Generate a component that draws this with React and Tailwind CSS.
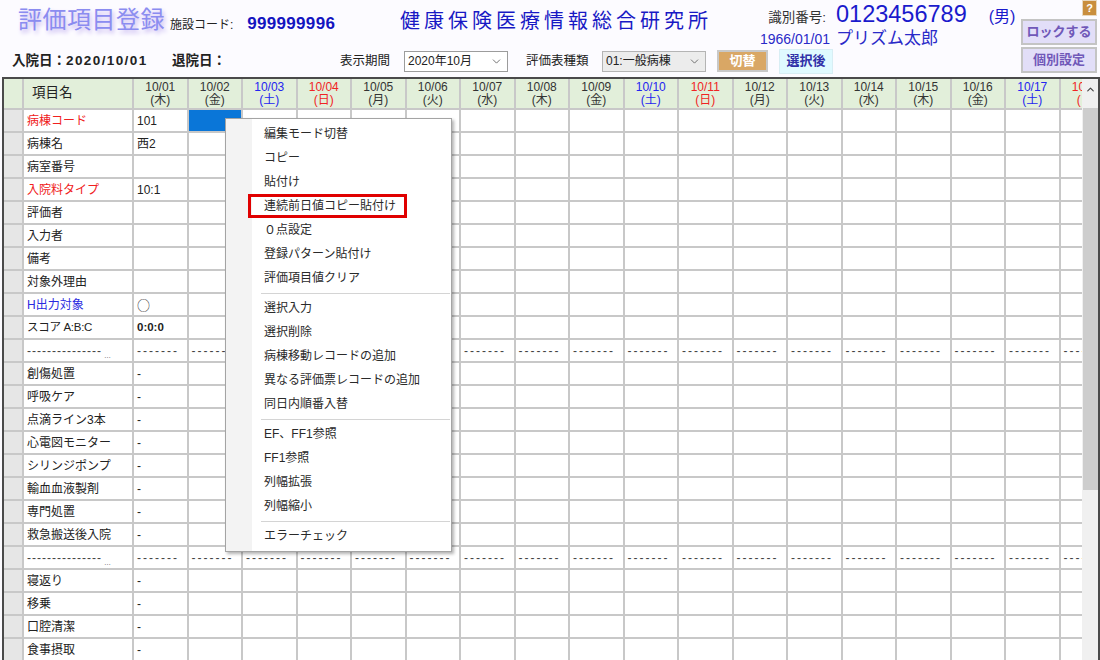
import React from 'react';
import { ChevronDown, ChevronUp } from 'lucide-react';

const days = [
  ['10/01', '木'], ['10/02', '金'], ['10/03', '土'], ['10/04', '日'], ['10/05', '月'], ['10/06', '火'],
  ['10/07', '水'], ['10/08', '木'], ['10/09', '金'], ['10/10', '土'], ['10/11', '日'], ['10/12', '月'],
  ['10/13', '火'], ['10/14', '水'], ['10/15', '木'], ['10/16', '金'], ['10/17', '土'], ['10/18', '日'],
];

const rows = [
  { label: '病棟コード', c: 'red', v: '101' },
  { label: '病棟名', v: '西2' },
  { label: '病室番号' },
  { label: '入院料タイプ', c: 'red', v: '10:1' },
  { label: '評価者' },
  { label: '入力者' },
  { label: '備考' },
  { label: '対象外理由' },
  { label: 'H出力対象', c: 'blue', v: '○' },
  { label: 'スコア A:B:C', v: '0:0:0' },
  { sep: true },
  { label: '創傷処置', v: '-' },
  { label: '呼吸ケア', v: '-' },
  { label: '点滴ライン3本', v: '-' },
  { label: '心電図モニター', v: '-' },
  { label: 'シリンジポンプ', v: '-' },
  { label: '輸血血液製剤', v: '-' },
  { label: '専門処置', v: '-' },
  { label: '救急搬送後入院', v: '-' },
  { sep: true },
  { label: '寝返り', v: '-' },
  { label: '移乗', v: '-' },
  { label: '口腔清潔', v: '-' },
  { label: '食事摂取', v: '-' },
];

const menu = [
  ['編集モード切替', 'コピー', '貼付け', '連続前日値コピー貼付け', '０点設定', '登録パターン貼付け', '評価項目値クリア'],
  ['選択入力', '選択削除', '病棟移動レコードの追加', '異なる評価票レコードの追加', '同日内順番入替'],
  ['EF、FF1参照', 'FF1参照', '列幅拡張', '列幅縮小'],
  ['エラーチェック'],
];

function dayColor(d) {
  if (d === '土') return 'text-[#2424f0]';
  if (d === '日') return 'text-[#f02424]';
  return 'text-[#333333]';
}

function labelColor(c) {
  if (c === 'red') return 'text-[#f02020]';
  if (c === 'blue') return 'text-[#2a2ae0]';
  return 'text-[#222222]';
}

function CellValue({ v }) {
  if (v === '○') return <span className="font-['Noto_Sans_CJK_JP',sans-serif] text-[13px] leading-none text-[#333]">○</span>;
  if (v === '0:0:0') return <span className="text-[11.5px] font-bold">0:0:0</span>;
  return <span>{v}</span>;
}

export default function App() {
  return (
    <div className="relative w-[1100px] h-[660px] overflow-hidden bg-[#fcfbff] font-['Liberation_Sans','Noto_Sans_CJK_JP',sans-serif] text-[#222222]">
      {/* Header */}
      <div className="flex h-[77px]">
        <div className="flex flex-col w-[1020px]">
          {/* row 1 */}
          <div className="flex h-[45px]">
            <div className="w-[170px] pl-[18px] pt-[5px] shrink-0">
              <span className="text-[24px] leading-[30px] text-[#8b8cf0] [text-shadow:2px_3px_4px_#c6b6f0] tracking-[0.5px]">評価項目登録</span>
            </div>
            <div className="w-[230px] shrink-0 pt-[11px] flex items-baseline">
              <span className="text-[12px] text-[#222]">施設コード:</span>
              <span className="ml-[14px] text-[17px] font-bold text-[#1414c0] tracking-[0.3px]">999999996</span>
            </div>
            <div className="w-[350px] shrink-0 pt-[8px]">
              <span className="text-[20px] leading-[26px] text-[#1818c4] tracking-[4px]">健康保険医療情報総合研究所</span>
            </div>
            <div className="grid grid-cols-[80px_auto] gap-x-[6px] items-baseline pt-[2px]">
              <span className="text-[13.5px] text-[#333] text-right pr-[4px]">識別番号:</span>
              <span className="flex items-baseline">
                <span className="text-[23.5px] leading-[24px] text-[#1a1acc]">0123456789</span>
                <span className="ml-[22px] text-[16px] text-[#1a1acc]">(男)</span>
              </span>
              <span className="text-[14px] leading-[18px] text-[#2a2ac8] text-right">1966/01/01</span>
              <span className="text-[17px] leading-[20px] text-[#2a2ac8]">プリズム太郎</span>
            </div>
          </div>
          {/* row 2 */}
          <div className="flex items-center h-[32px] text-[13px]">
            <div className="w-[160px] ml-[12px] shrink-0 font-bold text-[13.5px] whitespace-nowrap">
              入院日：<span className="tracking-[1.4px]">2020/10/01</span>
            </div>
            <div className="w-[168px] shrink-0 font-bold text-[13.5px]">退院日：</div>
            <div className="w-[64px] shrink-0 text-[12.5px]">表示期間</div>
            <div className="w-[104px] h-[21px] shrink-0 bg-white border border-[#9c9c9c] flex items-center justify-between pl-[3px] pr-[4px] text-[12px]">
              <span>2020年10月</span>
              <ChevronDown size={13} strokeWidth={1.5} className="text-[#555]" />
            </div>
            <div className="w-[76px] ml-[18px] shrink-0 text-[12.5px]">評価表種類</div>
            <div className="w-[104px] h-[21px] shrink-0 bg-[#ececec] border border-[#b4b4b4] flex items-center justify-between pl-[3px] pr-[4px] text-[12px]">
              <span>01:一般病棟</span>
              <ChevronDown size={13} strokeWidth={1.5} className="text-[#555]" />
            </div>
            <div className="w-[51px] h-[22px] ml-[11px] shrink-0 bg-[#d9a765] border-2 border-[#c8c8c8] flex items-center justify-center text-white font-bold text-[13px]">切替</div>
            <div className="w-[54px] h-[25px] ml-[11px] shrink-0 bg-[#e0faff] border border-[#d8eef4] flex items-center justify-center text-[#3030a8] font-bold text-[13px]">選択後</div>
          </div>
        </div>
        <div className="flex flex-col items-end w-[80px] pr-[3px]">
          <div className="w-[15px] h-[16px] bg-[#c98e3e] border border-[#e8d8c0] flex items-center justify-center text-white text-[11px] font-bold leading-none">?</div>
          <div className="mt-[3px] w-[76px] h-[26px] bg-[#e2def8] border-2 border-[#c4c4c4] flex items-center justify-center text-[#7058b8] font-bold text-[13px]">ロックする</div>
          <div className="mt-[2px] w-[76px] h-[26px] bg-[#e2def8] border-2 border-[#c4c4c4] flex items-center justify-center text-[#7058b8] font-bold text-[13px]">個別設定</div>
        </div>
      </div>

      {/* Table */}
      <div className="flex ml-[2px] h-[583px] border-t-2 border-l-2 border-r-2 border-[#4a4a4a] bg-white">
        <div className="flex-1 overflow-hidden">
          {/* header */}
          <div className="flex h-[31px] bg-[#e2efda]">
            <div className="w-[20px] shrink-0 border-r-2 border-b-2 border-[#c8c8c8]" />
            <div className="w-[110px] shrink-0 border-r-2 border-b-2 border-[#c8c8c8] flex items-center pl-[8px] text-[13.5px] text-[#222]">項目名</div>
            {days.map(([d, w]) => (
              <div key={d} className={`w-[54.5px] shrink-0 border-r-2 border-b-2 border-[#c8c8c8] flex flex-col items-center justify-center text-[12px] leading-[12.5px] ${dayColor(w)}`}>
                <span>{d}</span>
                <span>({w})</span>
              </div>
            ))}
          </div>
          {rows.map((r, i) => (
            <div key={i} className="flex h-[23px] text-[12px]">
              <div className="w-[20px] shrink-0 bg-[#e6e6e6] border-r-2 border-b-2 border-[#c8c8c8]" />
              <div className={`w-[110px] shrink-0 border-r-2 border-b-2 border-[#c8c8c8] flex items-center pl-[3px] whitespace-nowrap overflow-hidden ${labelColor(r.c)}`}>
                {r.sep ? (
                  <span className="text-[#444] flex items-end">
                    <span className="tracking-[1px]">---------------</span>
                    <span className="text-[7px] leading-[8px] ml-[2px]">…</span>
                  </span>
                ) : r.label === 'スコア A:B:C' ? (
                  <span className="text-[11.5px] tracking-[-0.3px]">スコア A:B:C</span>
                ) : (
                  r.label
                )}
              </div>
              {days.map(([d], j) => (
                <div
                  key={d}
                  className={`w-[54.5px] shrink-0 border-r-2 border-b-2 border-[#c8c8c8] flex items-center pl-[3px] whitespace-nowrap overflow-hidden ${i === 0 && j === 1 ? 'bg-[#0a76d8]' : ''}`}
                >
                  {r.sep ? (
                    <span className="text-[#444444] tracking-[2px]">-------</span>
                  ) : j === 0 && r.v ? (
                    <CellValue v={r.v} />
                  ) : null}
                </div>
              ))}
            </div>
          ))}
        </div>
        {/* scrollbar */}
        <div className="w-[16px] shrink-0 bg-[#f0f0f0] flex flex-col items-center">
          <div className="h-[20px] w-full flex items-center justify-center">
            <ChevronUp size={11} strokeWidth={2.5} className="text-[#444]" />
          </div>
          <div className="mt-[9px] w-[15px] h-[382px] bg-[#cdcdcd]" />
        </div>
      </div>

      {/* Context menu */}
      <div className="absolute left-[225px] top-[118px] w-[227px] bg-white border border-[#a4a4a4] shadow-[2px_2px_3px_rgba(0,0,0,0.3)] py-[3px] text-[12px] text-[#2a2a2a]">
        <div className="absolute left-0 top-0 bottom-0 w-[26px] bg-[#f3f3f3]" />
        {menu.map((group, gi) => (
          <React.Fragment key={gi}>
            {gi > 0 && (
              <div className="relative h-[6px] flex items-center">
                <div className="ml-[35px] mr-[1px] h-px flex-1 bg-[#d4d4d4]" />
              </div>
            )}
            {group.map((item) => (
              <div key={item} className="relative h-[24px] flex items-center pl-[38px] whitespace-nowrap">
                {item === '連続前日値コピー貼付け' && (
                  <div className="absolute left-[22px] top-0 w-[159px] h-[24px] border-[3px] border-[#e00000]" />
                )}
                <span className="relative">{item}</span>
              </div>
            ))}
          </React.Fragment>
        ))}
      </div>
    </div>
  );
}
